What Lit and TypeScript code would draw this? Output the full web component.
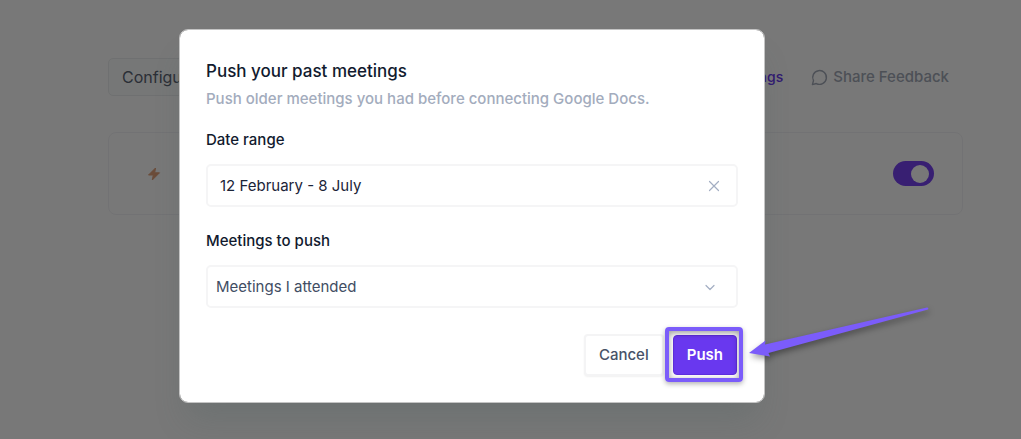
import { LitElement, html, css } from "lit";
import { customElement, state } from "lit/decorators.js";

@customElement("push-dialog")
class PushDialog extends LitElement {
  @state() private range = "12 February - 8 July";

  static styles = css`
    :host {
      display: block;
      width: 100%;
      max-width: 586px;
    }
    * {
      box-sizing: border-box;
    }
    .dialog {
      padding: 27px 26px 26px;
      border: 1px solid #c4c4c4;
      border-radius: 9px;
      background: #fff;
      background-clip: padding-box;
      box-shadow: 0 24px 32px -8px rgba(70, 90, 90, 0.22);
      color: #111a2e;
      font: 400 15px/24px Inter, sans-serif;
    }
    h1 {
      margin: 0;
      font-size: 17px;
      line-height: 28px;
      font-weight: 500;
    }
    .hint {
      margin: 0 0 16px;
      line-height: 27px;
      font-weight: 500;
      color: #a3acbd;
    }
    .label {
      display: block;
      margin-bottom: 12px;
      font-weight: 500;
    }
    .field {
      display: flex;
      align-items: center;
      height: 43px;
      margin-bottom: 22px;
      border: 2px solid #f5f5f6;
      border-radius: 5px;
    }
    .field.last {
      margin-bottom: 26px;
      display: grid;
    }
    .range {
      flex: 1;
      min-width: 0;
      padding: 0 12px;
      border: 0;
      outline: 0;
      background: none;
      font: inherit;
      color: #1b2438;
    }
    .clear {
      display: flex;
      padding: 4px;
      margin-right: 12px;
      border: 0;
      background: none;
    }
    .choice {
      grid-area: 1 / 1;
      width: 100%;
      padding: 0 8px;
      border: 0;
      outline: 0;
      appearance: none;
      background: none;
      font: inherit;
      color: #414d63;
    }
    .chevron {
      grid-area: 1 / 1;
      justify-self: end;
      margin-right: 20px;
      pointer-events: none;
    }
    .glyph {
      fill: none;
      stroke: #a3aec3;
      stroke-width: 1.2;
      stroke-linecap: round;
      stroke-linejoin: round;
    }
    .actions {
      display: flex;
      justify-content: flex-end;
      gap: 9px;
      padding-right: 1px;
    }
    .button {
      height: 42px;
      padding: 0 13px;
      border-radius: 4px;
      font: 500 15px/24px Inter, sans-serif;
    }
    .cancel {
      border: 2px solid #f4f4f5;
      background: #fff;
      color: #475268;
      box-shadow: 0 1px 2px rgba(0, 0, 0, 0.06);
    }
    .push {
      height: 40px;
      border: 1px solid #5f2fe0;
      background: #6938ef;
      color: #fff;
      font-weight: 600;
    }
    .target {
      position: relative;
      display: flex;
      align-items: center;
    }
    .ring {
      position: absolute;
      inset: -7px -6px -6px -8px;
      border: 4px solid #7b5cfa;
      border-radius: 4px;
      box-shadow: 0 2px 5px rgba(0, 0, 0, 0.3), inset 0 2px 6px rgba(0, 0, 0, 0.4);
      pointer-events: none;
    }
    .arrow {
      position: absolute;
      left: 100%;
      top: -35px;
      pointer-events: none;
      filter: drop-shadow(1px 3px 3px rgba(0, 0, 0, 0.4));
    }
  `;

  render() {
    return html`
      <form class="dialog" role="dialog" aria-labelledby="title" @submit=${(e: Event) => e.preventDefault()}>
        <h1 id="title">Push your past meetings</h1>
        <p class="hint">Push older meetings you had before connecting Google Docs.</p>
        <label class="label" for="range">Date range</label>
        <div class="field">
          <input
            class="range"
            id="range"
            type="text"
            .value=${this.range}
            @input=${(e: Event) => (this.range = (e.target as HTMLInputElement).value)}
          />
          <button class="clear" type="button" aria-label="Clear date range" @click=${() => (this.range = "")}>
            <svg class="glyph" width="12" height="12" viewBox="0 0 12 12"><path d="M1.5 1.5l9 9M10.5 1.5l-9 9" /></svg>
          </button>
        </div>
        <label class="label" for="choice">Meetings to push</label>
        <div class="field last">
          <select class="choice" id="choice">
            <option>Meetings I attended</option>
          </select>
          <svg class="glyph chevron" width="12" height="12" viewBox="0 0 12 12"><path d="M2 4.5l4 4 4-4" /></svg>
        </div>
        <div class="actions">
          <button class="button cancel" type="button">Cancel</button>
          <div class="target">
            <button class="button push" type="submit">Push</button>
            <span class="ring"></span>
            <svg class="arrow" width="200" height="70" viewBox="0 0 200 70">
              <path
                fill="#7b5cfa"
                d="M12 54L28.500 41.500L28 45.500L190 8.500Q192 8.500 191 10.500L31.500 54L33 57.500Z"
              />
            </svg>
          </div>
        </div>
      </form>
    `;
  }
}

@customElement("app-root")
class AppRoot extends LitElement {
  static styles = css`
    :host {
      display: block;
      font: 400 16px/24px Inter, sans-serif;
    }
    * {
      box-sizing: border-box;
    }
    .screen {
      display: grid;
      min-height: 100vh;
      background: #fff;
      overflow: hidden;
    }
    .page {
      grid-area: 1 / 1;
      padding: 58px 58px 0 108px;
    }
    .bar {
      display: flex;
      align-items: center;
      gap: 28px;
      margin-bottom: 36px;
    }
    .tab {
      height: 38px;
      margin-right: auto;
      padding: 0 13px;
      border: 1px solid #eceff0;
      border-radius: 5px;
      background: #fafdfd;
      font: inherit;
      color: #5c6474;
    }
    .link {
      font: 500 14px/24px Inter, sans-serif;
      color: #6938ef;
      text-decoration: none;
    }
    .feedback {
      display: flex;
      align-items: center;
      gap: 5px;
      padding: 0;
      margin-right: 14px;
      border: 0;
      background: none;
      font: 500 15px/24px Inter, sans-serif;
      color: #a3aab8;
    }
    .bubble {
      fill: none;
      stroke: #a3aab8;
      stroke-width: 2;
      stroke-linecap: round;
      stroke-linejoin: round;
    }
    .card {
      display: flex;
      align-items: center;
      justify-content: space-between;
      height: 83px;
      padding: 0 28px 0 38px;
      border: 1px solid #f3f3f6;
      border-radius: 8px;
    }
    .toggle {
      appearance: none;
      display: flex;
      align-items: center;
      justify-content: flex-end;
      width: 41px;
      height: 25px;
      margin: 0;
      padding: 5px;
      border-radius: 13px;
      background: #7843f2;
    }
    .toggle::before {
      content: "";
      width: 18px;
      height: 18px;
      border-radius: 50%;
      background: #fff;
    }
    .toggle:not(:checked) {
      justify-content: flex-start;
      background: #c5cad3;
    }
    .overlay {
      grid-area: 1 / 1;
      z-index: 1;
      display: flex;
      align-items: flex-start;
      justify-content: center;
      padding: 29px 77px 29px 0;
      background: rgba(0, 0, 0, 0.53);
    }
  `;

  render() {
    return html`
      <div class="screen">
        <main class="page">
          <div class="bar">
            <button class="tab">Configure</button>
            <a class="link" href="#">Settings</a>
            <button class="feedback">
              <svg class="bubble" width="17" height="17" viewBox="0 0 24 24">
                <path d="M7.500 20.500A9.700 9.700 0 1 0 3.500 16.500L2 22Z" />
              </svg>
              Share Feedback
            </button>
          </div>
          <section class="card">
            <svg width="14" height="14" viewBox="0 0 14 14">
              <path fill="#e3a27a" stroke="#e3a27a" stroke-linejoin="round" d="M8.500 1L1.500 8H6.300L5.300 13L12.500 5.800H7.700Z" />
            </svg>
            <input class="toggle" type="checkbox" aria-label="Enable integration" checked />
          </section>
        </main>
        <div class="overlay"><push-dialog></push-dialog></div>
      </div>
    `;
  }
}
